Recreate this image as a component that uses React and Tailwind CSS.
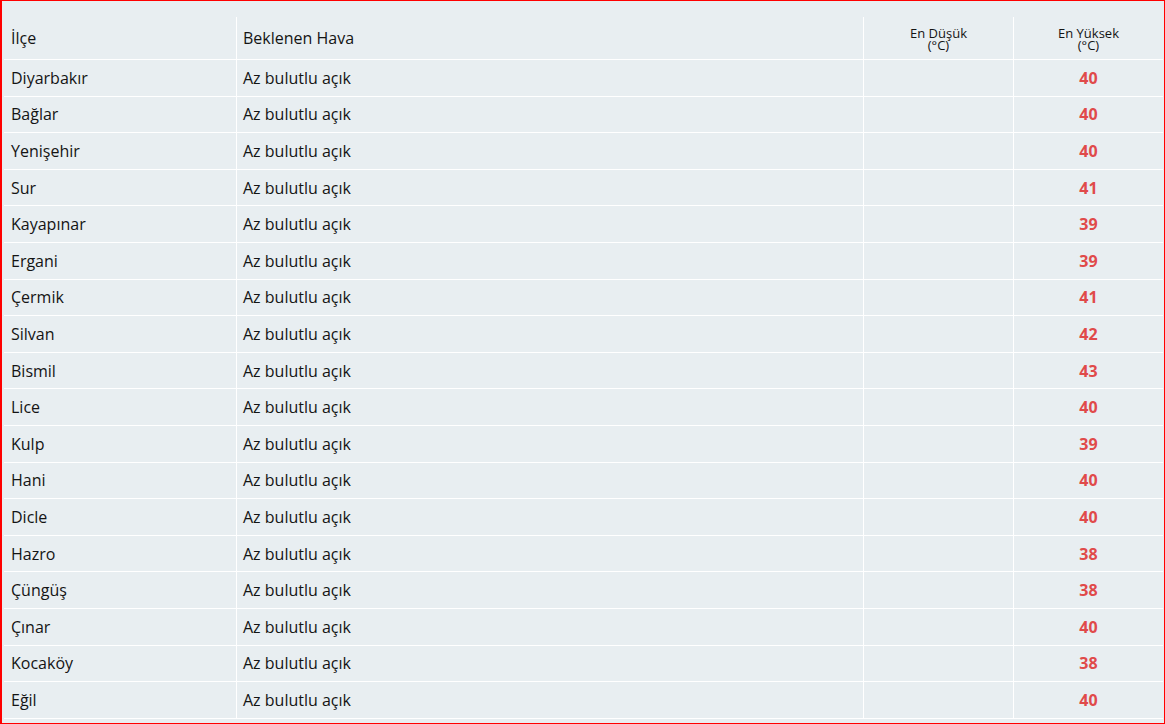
import React from "react";

const rows = [
  ["Diyarbakır", 40],
  ["Bağlar", 40],
  ["Yenişehir", 40],
  ["Sur", 41],
  ["Kayapınar", 39],
  ["Ergani", 39],
  ["Çermik", 41],
  ["Silvan", 42],
  ["Bismil", 43],
  ["Lice", 40],
  ["Kulp", 39],
  ["Hani", 40],
  ["Dicle", 40],
  ["Hazro", 38],
  ["Çüngüş", 38],
  ["Çınar", 40],
  ["Kocaköy", 38],
  ["Eğil", 40],
];

export default function App() {
  return (
    <div
      className="w-[1165px] h-[724px] border border-[#ff0000] border-l-2 bg-[#e8eef1] pt-4 pl-[2px] text-[#141414] overflow-hidden"
      style={{ fontFamily: '"Open Sans", "Noto Sans", sans-serif' }}
    >
      <div className="w-[1159px]">
        <div className="grid grid-cols-[232px_627px_150px_150px] h-[43px] border-b border-white">
          <div className="flex items-center pl-[7px] text-[16px]">İlçe</div>
          <div className="flex items-center pl-[6px] border-l border-white text-[16px]">Beklenen Hava</div>
          <div className="flex flex-col items-center justify-center border-l border-white text-[13px] leading-[12px] pt-[2px]">
            <span>En Düşük</span>
            <span>(°C)</span>
          </div>
          <div className="flex flex-col items-center justify-center border-l border-white text-[13px] leading-[12px] pt-[2px]">
            <span>En Yüksek</span>
            <span>(°C)</span>
          </div>
        </div>
        {rows.map(([name, hi]) => (
          <div
            key={name}
            className="grid grid-cols-[232px_627px_150px_150px] h-[36.6px] border-b border-white"
          >
            <div className="flex items-center pl-[7px] text-[16px]">{name}</div>
            <div className="flex items-center pl-[6px] border-l border-white text-[16px]">Az bulutlu açık</div>
            <div className="border-l border-white"></div>
            <div className="flex items-center justify-center border-l border-white text-[16px] font-bold text-[#e04a4a]">
              {hi}
            </div>
          </div>
        ))}
      </div>
    </div>
  );
}
